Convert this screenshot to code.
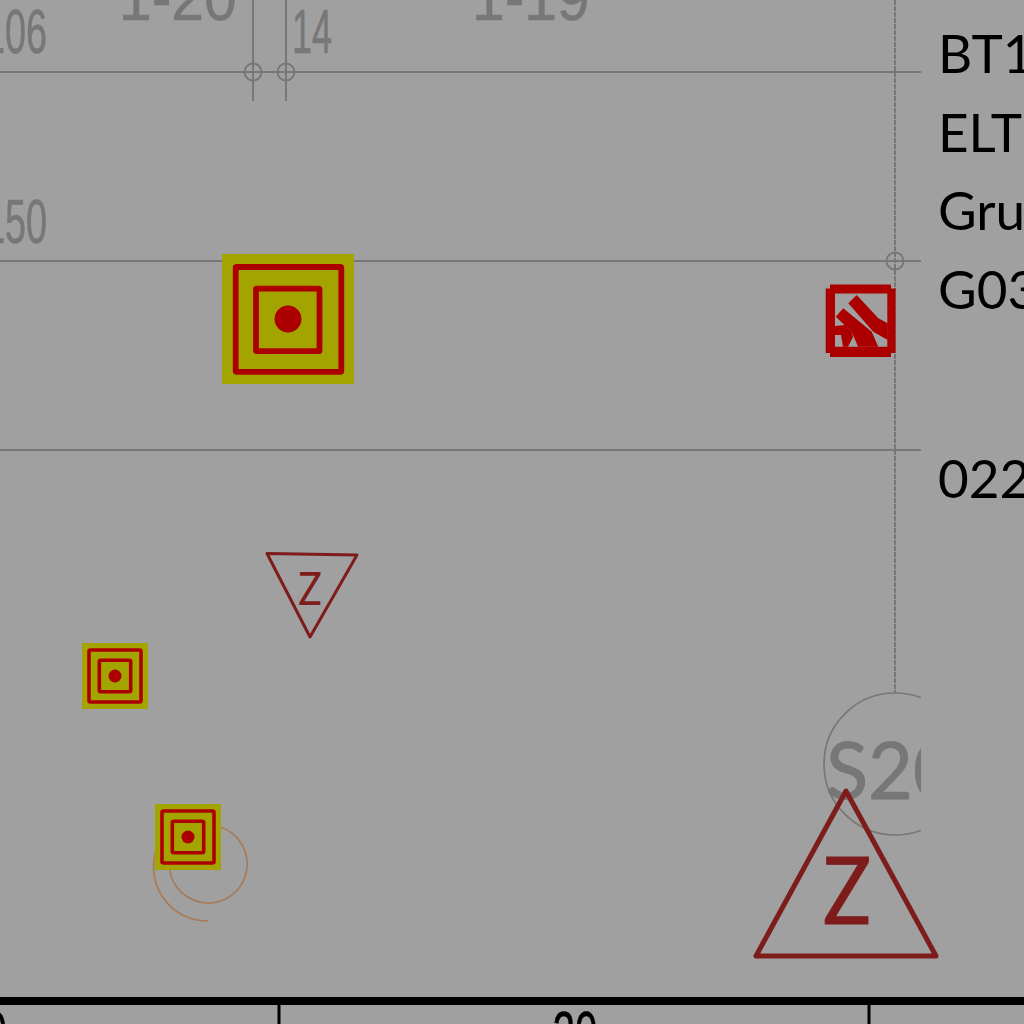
const GRAY = "#777777";
const RED = "#ac0000";
const YEL = "#a4a400";
const MAR = "#7e1c1c";

function Target({ x, y }) {
  return (
    <g transform={`translate(${x} ${y})`}>
      <rect x={-33} y={-33} width={66} height={66} fill={YEL} />
      <rect x={-26} y={-26} width={52} height={52} rx={1.5} fill="none" stroke={RED} strokeWidth={3.6} />
      <rect x={-15.7} y={-15.7} width={31.4} height={31.4} rx={1.5} fill="none" stroke={RED} strokeWidth={3.6} />
      <circle r={6.5} fill={RED} />
    </g>
  );
}

function Cross({ x, y }) {
  return <circle cx={x} cy={y} r={8.5} fill="none" stroke={GRAY} strokeWidth={1.9} />;
}

function Narrow({ x, y, sx = 0.62, size = 63, anchor = "start", children, fill = GRAY }) {
  return (
    <text
      transform={`translate(${x} ${y}) scale(${sx} 1)`}
      fontFamily="'Liberation Sans', sans-serif"
      fontSize={size}
      textAnchor={anchor}
      fill={fill}
      stroke={fill}
      strokeWidth={0.6}
    >
      {children}
    </text>
  );
}

export default function App() {
  return (
    <div className="relative w-[1024px] h-[1024px] overflow-hidden bg-[#a0a0a0]">
      <svg width="1024" height="1024" viewBox="0 0 1024 1024" className="block">
        <defs>
          <clipPath id="clipRight"><rect x="0" y="0" width="921" height="1024" /></clipPath>
        </defs>
        {/* grid lines */}
        <g stroke={GRAY} strokeWidth={2} fill="none">
          <path d="M0 72H921M0 261H921M0 450H921" />
          <path d="M253 0V101M286 0V101" />
          <path d="M895 0V693" strokeWidth={2} strokeDasharray="5 1" />
        </g>
        <Cross x={253} y={72} />
        <Cross x={286} y={72} />
        <Cross x={895} y={261} />

        {/* dimension labels */}
        <Narrow x={119} y={20} sx={0.92} size={64}>1-20</Narrow>
        <Narrow x={472} y={20} sx={0.92} size={64}>1-19</Narrow>
        <Narrow x={47} y={53} anchor="end" sx={0.6}>106</Narrow>
        <Narrow x={47} y={242.5} anchor="end" sx={0.6}>150</Narrow>
        <Narrow x={292} y={53} sx={0.57}>14</Narrow>

        {/* arcs */}
        <g fill="none" stroke="#a87a55" strokeWidth={1.7}>
          <path d="M221 827.2 A39 39 0 1 1 169.5 869" />
          <path d="M157 848 A54 54 0 0 0 208 921" />
        </g>

        {/* big target */}
        <rect x={222} y={254} width={132} height={130} fill={YEL} />
        <rect x={235.7} y={267} width={105.6} height={104.8} rx={1} fill="none" stroke={RED} strokeWidth={5.8} />
        <rect x={256} y={288.7} width={63.5} height={62.5} rx={1} fill="none" stroke={RED} strokeWidth={5.8} />
        <circle cx={288} cy={319} r={13.5} fill={RED} />

        {/* small targets */}
        <Target x={115} y={676} />
        <Target x={188} y={837} />

        {/* hatched square */}
        <g fill={RED}>
          <path fillRule="evenodd" d="M830 284.5H891V288.5H895.5V353H891V357H830V353H825.7V288.5H830ZM835 293.5V346.7H887.3V293.5Z" />
          <path d="M856.7 295L848.3 303.3L873.3 331.7L887.7 340V323.3L878.3 318.3Z" />
          <path d="M843.3 308.3L835.7 316.7L851.7 331.7L858 346.7H878.3L871.7 331.7Z" />
          <path d="M835 326L845 325L852 332L853 337L848 346.7H843L841 335H835Z" />
        </g>

        {/* section bubble */}
        <g clipPath="url(#clipRight)">
          <circle cx={895} cy={764} r={71} fill="none" stroke={GRAY} strokeWidth={1.7} />
          <text transform="translate(826 799) scale(0.97 1)" fontFamily="Lato, sans-serif" fontSize={80} fill={GRAY} stroke={GRAY} strokeWidth={1}>S20</text>
        </g>

        {/* down triangle */}
        <path d="M267 553.5L357 555L310 637Z" fill="none" stroke={MAR} strokeWidth={3} strokeLinejoin="round" />
        <text transform="translate(310 605) scale(0.85 1)" textAnchor="middle" fontFamily="Lato, sans-serif" fontSize={46} fill={MAR}>Z</text>

        {/* up triangle */}
        <path d="M846 791L756 956H936Z" fill="none" stroke={MAR} strokeWidth={5} strokeLinejoin="round" />
        <text transform="translate(847 923.5) scale(0.85 1)" textAnchor="middle" fontFamily="Lato, sans-serif" fontSize={94} fill={MAR} stroke={MAR} strokeWidth={1}>Z</text>

        {/* bottom scale bar */}
        <rect x={0} y={997} width={1024} height={8} fill="#000" />
        <rect x={277.5} y={1005} width={3} height={19} fill="#000" />
        <rect x={867.5} y={1005} width={3} height={19} fill="#000" />
        <Narrow x={575} y={1055} anchor="middle" sx={0.64} fill="#000">20</Narrow>
        <Narrow x={7} y={1055} anchor="end" sx={0.64} fill="#000">0</Narrow>
      </svg>

      <div className="absolute left-[938px] top-[14px] font-['Lato',sans-serif] text-[53px] leading-[78.7px] text-black whitespace-nowrap">
        <div>BT1</div>
        <div>ELT</div>
        <div>Gru</div>
        <div>G03</div>
        <div className="mt-[110px]">022</div>
      </div>
    </div>
  );
}
